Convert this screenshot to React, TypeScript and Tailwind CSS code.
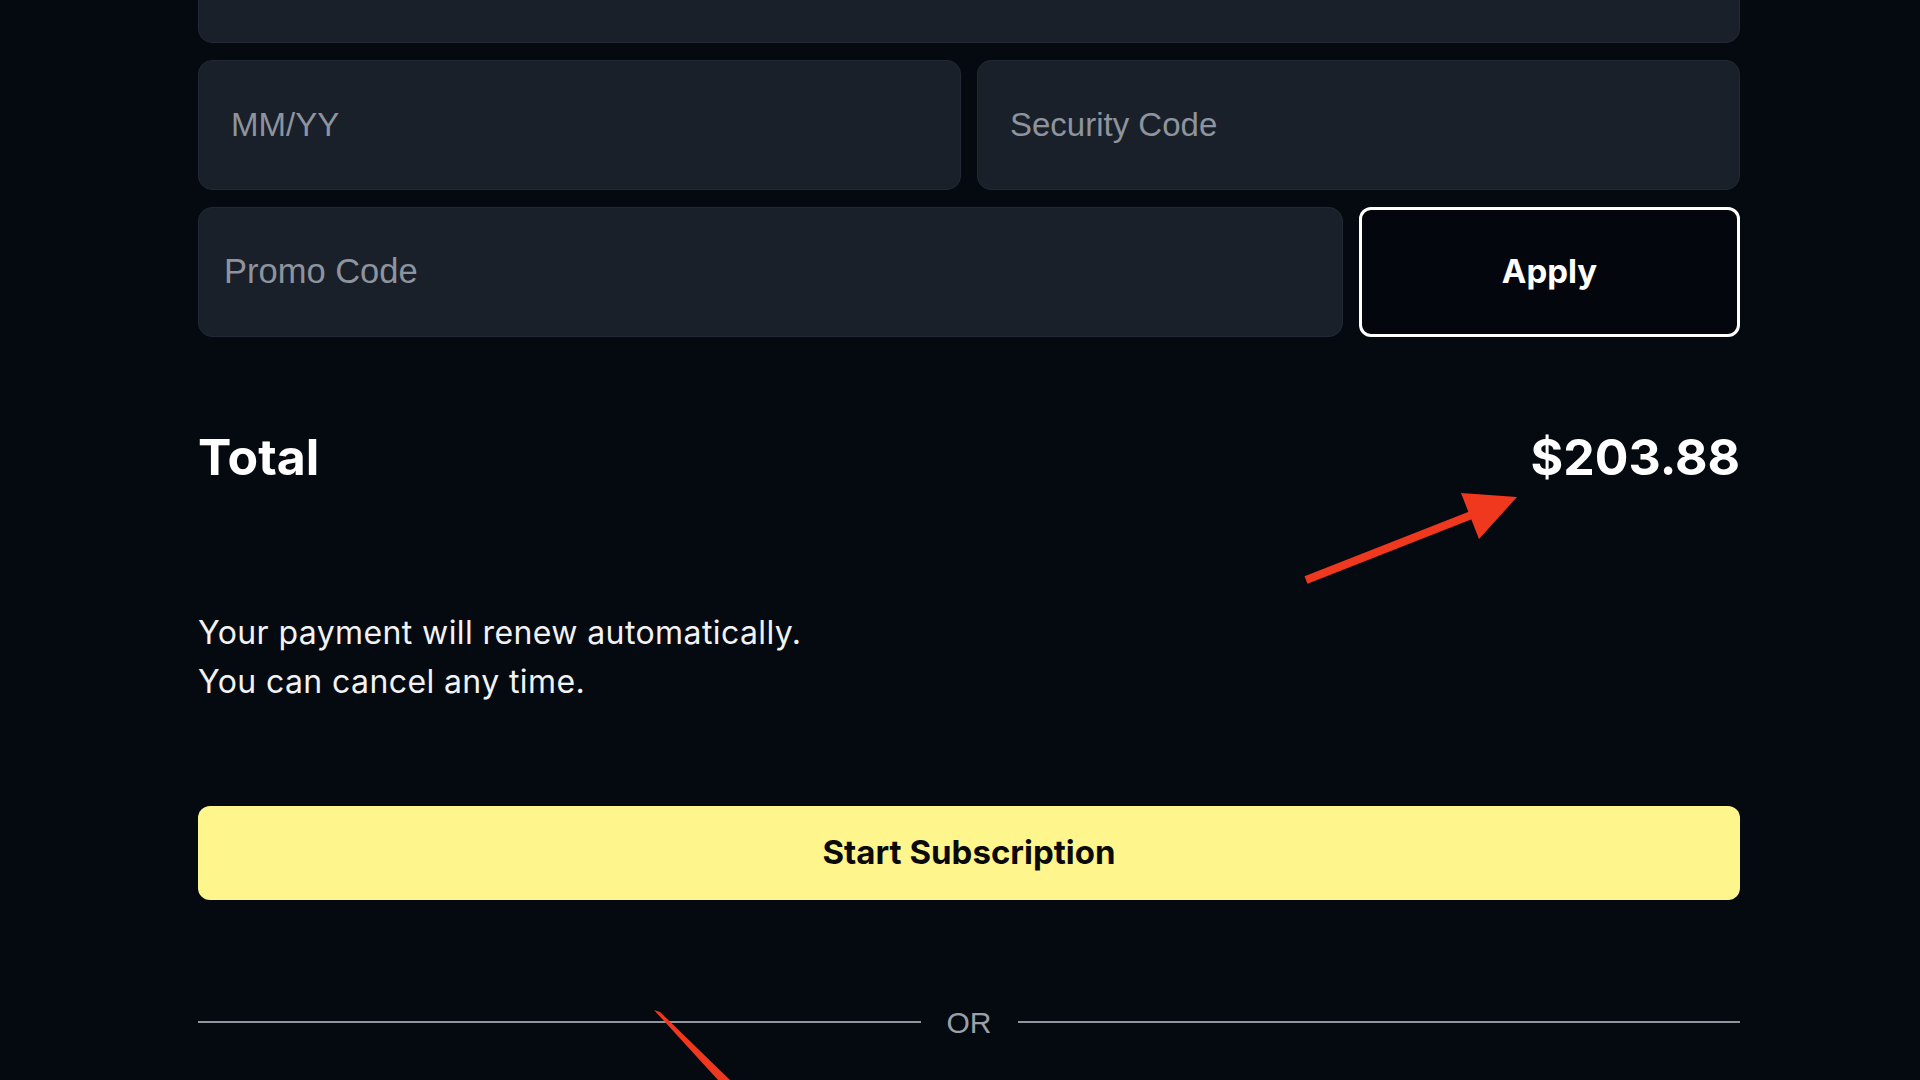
import React from "react";

function Field({ text, className = "" }: { text: string; className?: string }) {
  return (
    <div
      className={`h-[130px] rounded-[14px] bg-[#1a202a] border border-[#222935] flex items-center ${className}`}
    >
      <span className="text-[33px] text-[#8d949e] font-['Liberation_Sans',Arial,sans-serif]">{text}</span>
    </div>
  );
}

export default function App() {
  return (
    <div className="relative w-[1920px] h-[1080px] overflow-hidden bg-[#050910] font-['Inter',sans-serif]">
      <div className="ml-[198px] w-[1542px] flex flex-col">
        <div className="mt-[-87px] h-[130px] rounded-[14px] bg-[#1a202a] border border-[#222935]" />
        <div className="mt-[17px] flex gap-[16px]">
          <Field text="MM/YY" className="flex-1 pl-[32px]" />
          <Field text="Security Code" className="flex-1 pl-[32px]" />
        </div>
        <div className="mt-[17px] flex gap-[16px]">
          <div className="flex-1 h-[130px] rounded-[14px] bg-[#1a202a] border border-[#222935] flex items-center pl-[25px]">
            <span className="text-[34.5px] text-[#8d949e] font-['Liberation_Sans',Arial,sans-serif]">Promo Code</span>
          </div>
          <button className="w-[381px] h-[130px] rounded-[12px] border-[3px] border-white bg-[#03060c] flex items-center justify-center text-white text-[33px] font-bold">
            Apply
          </button>
        </div>
        <div className="mt-[90px] h-[60px] flex items-center justify-between text-white font-bold text-[50px] leading-[60px]">
          <span>Total</span>
          <span>$203.88</span>
        </div>
        <div className="mt-[121px] text-[32px] leading-[49px] tracking-[0.4px] text-[#f1f2f4]">
          <p>Your payment will renew automatically.</p>
          <p>You can cancel any time.</p>
        </div>
        <button className="mt-[100px] h-[94px] w-full rounded-[12px] bg-[#fef68c] text-[#0a0a0a] text-[33px] font-bold flex items-center justify-center">
          Start Subscription
        </button>
        <div className="mt-[102px] h-[40px] flex items-center gap-[26px]">
          <div className="flex-1 h-[2px] bg-[#8f959e]" />
          <span className="text-[30px] text-[#9aa0a8] font-['Liberation_Sans',Arial,sans-serif]">OR</span>
          <div className="flex-1 h-[2px] bg-[#8f959e]" />
        </div>
      </div>
      <svg className="absolute left-0 top-0 pointer-events-none" width="1920" height="1080" viewBox="0 0 1920 1080">
        <line x1="1306" y1="580" x2="1474" y2="514" stroke="#f0381e" strokeWidth="8" />
        <polygon points="1461,493 1517,497 1479,539" fill="#f0381e" />
        <polygon points="654,1010 660,1012 730,1080 718,1080" fill="#f0381e" />
      </svg>
    </div>
  );
}
